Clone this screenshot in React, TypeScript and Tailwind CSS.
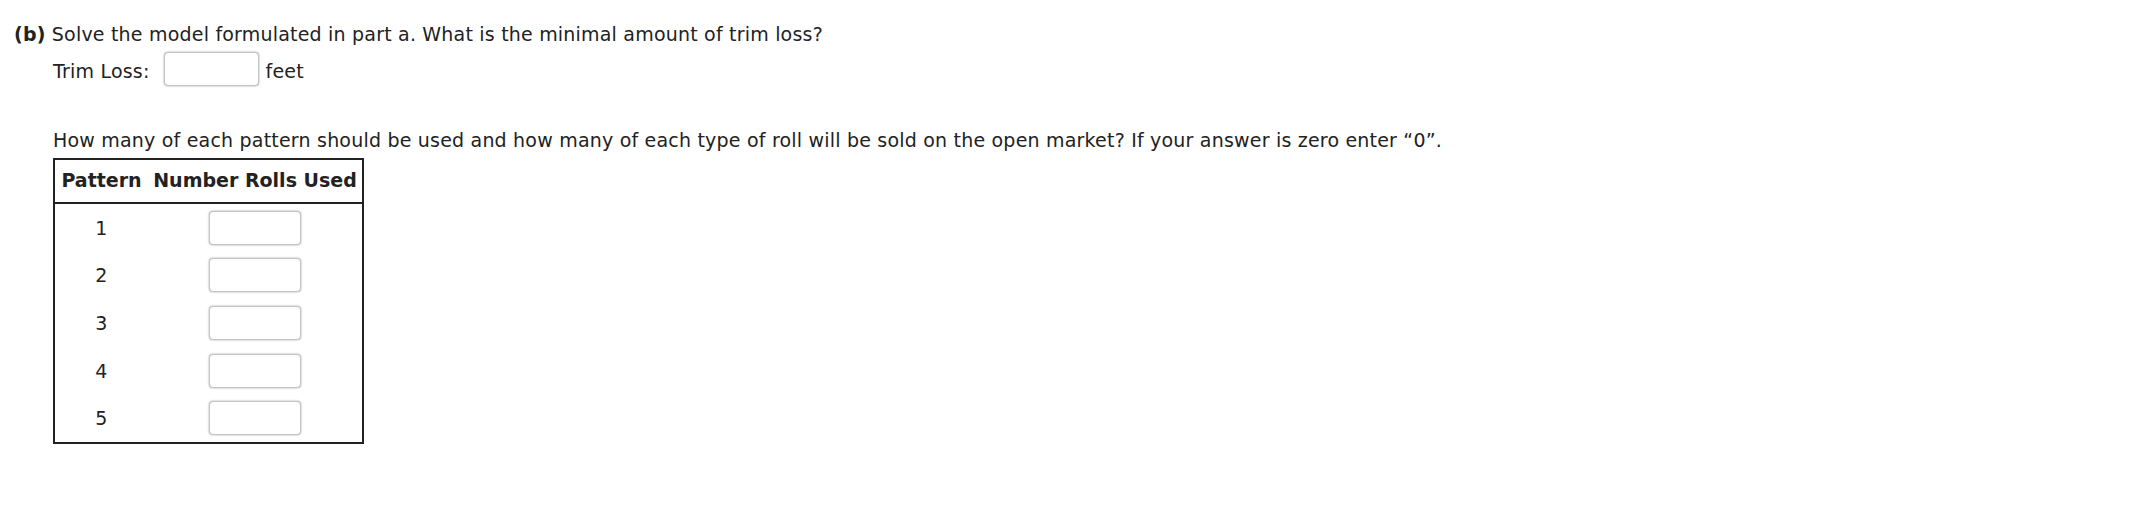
import React from "react";

const inputCls =
  "block h-[34px] rounded-[4px] border border-[#c4c4c4] bg-white shadow-[0_0_2px_rgba(0,0,0,0.4)] outline-none";

export default function App() {
  const rows = [1, 2, 3, 4, 5];
  return (
    <div
      className="min-h-[515px] w-[2147px] bg-white text-[#222] text-[19px] leading-[24px] tracking-[0.2px]"
      style={{ fontFamily: '"DejaVu Sans", Verdana, sans-serif' }}
    >
      <div className="pl-[14px] pt-[22px]">
        <p>
          <b>(b)</b> Solve the model formulated in part a. What is the minimal amount of trim loss?
        </p>
        <div className="mt-[6px] flex items-center pl-[39px]">
          <span className="pt-[4px]">Trim Loss:</span>
          <input className={inputCls + " ml-[14px] w-[95px] h-[33px]"} />
          <span className="ml-[7px] pt-[4px]">feet</span>
        </div>
        <p className="mt-[42px] pl-[39px]">
          How many of each pattern should be used and how many of each type of roll will be sold on the
          open market? If your answer is zero enter “0”.
        </p>
        <div className="ml-[39px] mt-[6px] w-[311px] border-2 border-[#222]">
          <div className="flex h-[44px] border-b-2 border-[#222] pt-[8px] font-bold tracking-normal">
            <div className="w-[93px] text-center">Pattern</div>
            <div className="flex-1 text-center">Number Rolls Used</div>
          </div>
          {rows.map((r) => (
            <div key={r} className="flex h-[47.6px] items-center">
              <div className="w-[93px] text-center">{r}</div>
              <div className="flex flex-1 justify-center">
                <input className={inputCls + " w-[92px]"} />
              </div>
            </div>
          ))}
        </div>
      </div>
    </div>
  );
}
